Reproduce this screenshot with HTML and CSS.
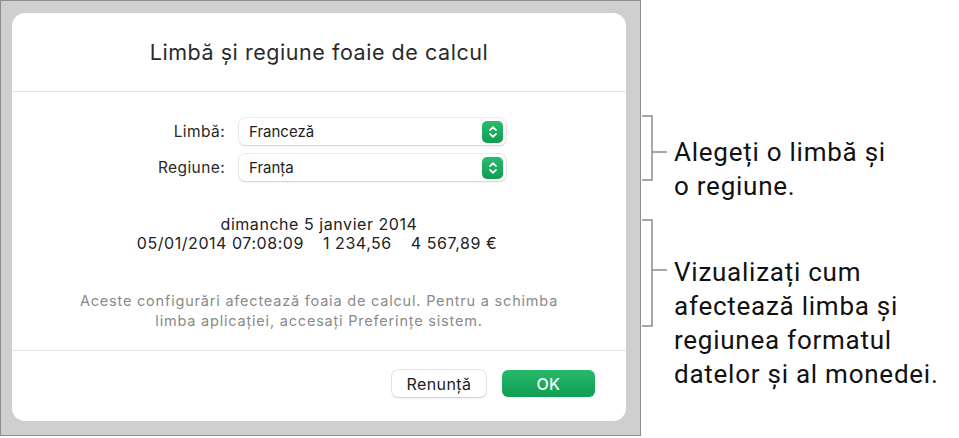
FILE: index.html
```html
<!DOCTYPE html>
<html lang="ro">
<head>
<meta charset="utf-8">
<link rel="stylesheet" href="styles.css">
</head>
<body>
<div class="page">
  <div class="panel">
    <div class="dialog">
      <div class="header">Limbă și regiune foaie de calcul</div>
      <div class="sep"></div>
      <div class="form">
        <div class="label">Limbă:</div>
        <div class="select"><span>Franceză</span><span class="stepper"><svg width="10" height="14" viewBox="0 0 10 14"><path d="M2 5.2 L5 2.2 L8 5.2 M2 8.8 L5 11.8 L8 8.8" fill="none" stroke="#fff" stroke-width="1.7" stroke-linecap="round" stroke-linejoin="round"/></svg></span></div>
        <div class="label">Regiune:</div>
        <div class="select"><span>Franța</span><span class="stepper"><svg width="10" height="14" viewBox="0 0 10 14"><path d="M2 5.2 L5 2.2 L8 5.2 M2 8.8 L5 11.8 L8 8.8" fill="none" stroke="#fff" stroke-width="1.7" stroke-linecap="round" stroke-linejoin="round"/></svg></span></div>
      </div>
      <div class="preview">
        <div>dimanche 5 janvier 2014</div>
        <div class="nums"><span>05/01/2014 07:08:09</span><span>1 234,56</span><span>4 567,89 €</span></div>
      </div>
      <div class="note">Aceste configurări afectează foaia de calcul. Pentru a schimba<br>limba aplicației, accesați Preferințe sistem.</div>
      <div class="sep"></div>
      <div class="buttons">
        <button class="btn cancel">Renunță</button>
        <button class="btn ok">OK</button>
      </div>
    </div>
  </div>
  <div class="notes">
    <div class="callout first">
      <svg class="bracket" width="32" height="66" viewBox="0 0 32 66"><path d="M0 1 H10 V65 H0 M10 37 H25" fill="none" stroke="#8a8a8a" stroke-width="1.5"/></svg>
      <div class="ctext t1">Alegeți o limbă și<br>o regiune.</div>
    </div>
    <div class="callout second">
      <svg class="bracket" width="32" height="108" viewBox="0 0 32 108"><path d="M0 1 H10 V107 H0 M10 51 H25" fill="none" stroke="#8a8a8a" stroke-width="1.5"/></svg>
      <div class="ctext t2">Vizualizați cum<br>afectează limba și<br>regiunea formatul<br>datelor și al monedei.</div>
    </div>
  </div>
</div>
</body>
</html>
```
FILE: styles.css
```css
html, body {
  margin: 0;
  padding: 0;
  background: #fff;
}
body {
  font-family: "Inter", "Roboto", "Liberation Sans", sans-serif;
}
.page {
  display: flex;
  width: 959px;
  height: 438px;
}
.panel {
  width: 614px;
  height: 408px;
  padding: 12px 14px 14px 11px;
  background: #cfcfcf;
  border: 1px solid #8e8e8e;
  flex: none;
}
.dialog {
  width: 614px;
  height: 408px;
  background: #fff;
  border-radius: 13px;
  display: flex;
  flex-direction: column;
}
.header {
  height: 78px;
  display: flex;
  align-items: center;
  justify-content: center;
  font-size: 21.5px;
  color: #2a2a2a;
  letter-spacing: 0.55px;
}
.sep {
  height: 1px;
  background: #e4e4e4;
  flex: none;
}
.form {
  display: grid;
  grid-template-columns: 213px 267px;
  column-gap: 14px;
  row-gap: 9px;
  padding-top: 26px;
  align-items: center;
}
.label {
  text-align: right;
  font-size: 15.5px;
  letter-spacing: 0.4px;
  color: #2a2a2a;
}
.select {
  height: 27px;
  box-sizing: border-box;
  border-radius: 6px;
  background: #fff;
  box-shadow: 0 0 0 0.5px #d6d6d6, 0 1px 1.5px rgba(0,0,0,0.18);
  display: flex;
  align-items: center;
  justify-content: space-between;
  padding: 0 3px 0 10px;
  font-size: 15px;
  color: #222;
}
.stepper {
  width: 21px;
  height: 22px;
  border-radius: 5px;
  background: linear-gradient(#2abb6c, #119c51);
  display: flex;
  align-items: center;
  justify-content: center;
}
.stepper svg { display: block; }
.preview {
  margin-top: 34px;
  text-align: center;
  font-size: 16px;
  letter-spacing: 0.55px;
  line-height: 19px;
  color: #222;
}
.nums {
  display: flex;
  justify-content: center;
  gap: 19px;
  padding-right: 4px;
}
.note {
  margin-top: 38px;
  text-align: center;
  font-size: 14.5px;
  letter-spacing: 0.8px;
  line-height: 20px;
  color: #8a8a8a;
  height: 40px;
  margin-bottom: 19px;
}
.buttons {
  display: flex;
  justify-content: flex-end;
  gap: 16px;
  padding: 19px 31px 0 0;
}
.btn {
  height: 27px;
  border: none;
  border-radius: 6px;
  font-family: inherit;
  font-size: 16px;
  letter-spacing: 0.4px;
  padding: 0;
}
.cancel {
  width: 94px;
  background: #fff;
  color: #222;
  box-shadow: 0 0 0 0.5px #d0d0d0, 0 1px 1.5px rgba(0,0,0,0.2);
}
.ok {
  width: 93px;
  background: linear-gradient(#28b96a, #0f9e52);
  color: #fff;
  font-weight: 500;
}
.notes {
  padding-top: 115px;
  padding-left: 1px;
  display: flex;
  flex-direction: column;
}
.callout {
  display: flex;
  align-items: flex-start;
}
.bracket { display: block; flex: none; }
.second { margin-top: 16px; }
.ctext {
  font-family: "Roboto", "Liberation Sans", sans-serif;
  font-size: 26px;
  letter-spacing: 0.75px;
  line-height: 34px;
  color: #111;
  white-space: nowrap;
}
.t1 { margin-top: 20px; }
.t2 { margin-top: 36px; }
```
